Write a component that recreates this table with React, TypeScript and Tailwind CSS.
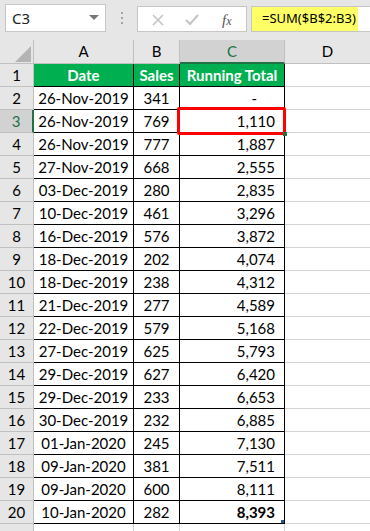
import React from "react";

const rows: [number, string, string, string][] = [
  [2, "26-Nov-2019", "341", "-"],
  [3, "26-Nov-2019", "769", "1,110"],
  [4, "26-Nov-2019", "777", "1,887"],
  [5, "27-Nov-2019", "668", "2,555"],
  [6, "03-Dec-2019", "280", "2,835"],
  [7, "10-Dec-2019", "461", "3,296"],
  [8, "16-Dec-2019", "576", "3,872"],
  [9, "18-Dec-2019", "202", "4,074"],
  [10, "18-Dec-2019", "238", "4,312"],
  [11, "21-Dec-2019", "277", "4,589"],
  [12, "22-Dec-2019", "579", "5,168"],
  [13, "27-Dec-2019", "625", "5,793"],
  [14, "29-Dec-2019", "627", "6,420"],
  [15, "29-Dec-2019", "233", "6,653"],
  [16, "30-Dec-2019", "232", "6,885"],
  [17, "01-Jan-2020", "245", "7,130"],
  [18, "09-Jan-2020", "381", "7,511"],
  [19, "09-Jan-2020", "600", "8,111"],
  [20, "10-Jan-2020", "282", "8,393"],
];

const cellFont = { fontFamily: "Lato, 'Open Sans', sans-serif" };

export default function App() {
  return (
    <div className="w-[370px] h-[531px] overflow-hidden bg-white text-black" style={cellFont}>
      {/* Toolbar */}
      <div className="h-[40px] bg-[#e6e6e6] flex items-start">
        <div
          className="ml-[5px] mt-[4px] w-[101px] h-[28px] bg-white border border-[#c6c6c6] flex items-center justify-between pl-[6px] pr-[6px]"
          style={{ fontFamily: "'Noto Sans', sans-serif" }}
        >
          <span className="text-[15px] text-[#222] leading-none">C3</span>
          <svg width="10" height="6" viewBox="0 0 10 6">
            <path d="M0 0 L10 0 L5 5 Z" fill="#777" />
          </svg>
        </div>
        <div className="w-[31px] h-[40px] flex flex-col items-center pt-[12px] gap-[3px]">
          <div className="w-[2px] h-[2px] bg-[#a6a6a6]" />
          <div className="w-[2px] h-[2px] bg-[#a6a6a6]" />
          <div className="w-[2px] h-[2px] bg-[#a6a6a6]" />
        </div>
        <div className="mt-[6px] w-[110px] h-[26px] bg-white border border-[#c6c6c6] flex items-center relative">
          <svg className="absolute left-[14px] top-[7px]" width="12" height="12" viewBox="0 0 12 12">
            <path d="M1 1 L11 11 M11 1 L1 11" stroke="#c4c4c4" strokeWidth="1.6" />
          </svg>
          <svg className="absolute left-[47px] top-[7px]" width="14" height="12" viewBox="0 0 14 12">
            <path d="M1 6 L5 10 L13 1" stroke="#c4c4c4" strokeWidth="2" fill="none" />
          </svg>
          <span
            className="absolute left-[84px] top-[2px] italic text-[15px] text-[#555]"
            style={{ fontFamily: "'Liberation Serif', serif" }}
          >
            f<span className="text-[12px]">x</span>
          </span>
        </div>
        <div className="ml-[4px] mt-[6px] flex-1 h-[26px] bg-white border-y border-l border-[#c6c6c6] flex">
          <div
            className="w-[106px] h-full bg-[#ffff66] flex items-center pl-[10px] text-[13px] text-black whitespace-nowrap"
            style={{ fontFamily: "'Noto Sans', sans-serif" }}
          >
            =SUM($B$2:B3)
          </div>
        </div>
      </div>

      {/* Column header */}
      <div className="flex h-[24px] bg-[#e6e6e6] text-[15px]">
        <div className="w-[34px] h-full border-r border-b border-[#c0c0c0] relative">
          <svg className="absolute left-[15px] top-[6px]" width="16" height="16" viewBox="0 0 16 16">
            <path d="M16 0 L16 16 L0 16 Z" fill="#b4b4b4" />
          </svg>
        </div>
        <div className="w-[100px] h-full border-r border-b border-[#c0c0c0] flex items-center justify-center">A</div>
        <div className="w-[46px] h-full border-r border-b border-[#c0c0c0] flex items-center justify-center">B</div>
        <div className="w-[105px] h-full border-r border-b-2 border-r-[#c0c0c0] border-b-[#217346] bg-[#d2d2d2] flex items-center justify-center text-[#217346]">C</div>
        <div className="flex-1 h-full border-b border-[#c0c0c0] flex items-center justify-center">D</div>
      </div>

      {/* Row 1 header */}
      <div className="flex h-[23px] text-[15px]">
        <div className="w-[34px] h-full bg-[#e6e6e6] border-r border-b border-[#c0c0c0] flex items-center justify-center">1</div>
        <div className="w-[100px] h-full bg-[#00b050] border-r border-b border-black flex items-center justify-center font-bold text-white">Date</div>
        <div className="w-[46px] h-full bg-[#00b050] border-r border-b border-black flex items-center justify-center font-bold text-white">Sales</div>
        <div className="w-[105px] h-full bg-[#00b050] border-r border-b border-black flex items-center justify-center font-bold text-white">Running Total</div>
        <div className="flex-1 h-full border-b border-[#d4d4d4]" />
      </div>

      {rows.map(([n, d, s, t]) => {
        const sel = n === 3;
        const last = n === 20;
        return (
          <div key={n} className="flex h-[23px] text-[15px]">
            <div
              className={
                sel
                  ? "w-[34px] h-full bg-[#d2d2d2] border-r-2 border-r-[#217346] border-b border-b-[#c0c0c0] flex items-center justify-center text-[#217346]"
                  : "w-[34px] h-full bg-[#e6e6e6] border-r border-b border-[#c0c0c0] flex items-center justify-center"
              }
            >
              {n}
            </div>
            <div className="w-[100px] h-full border-r border-b border-black flex items-center justify-center">{d}</div>
            <div className="w-[46px] h-full border-r border-b border-black flex items-center justify-center">{s}</div>
            <div
              className={
                "w-[105px] h-full border-r border-b border-black flex items-center justify-end relative " +
                (t === "-" ? "pr-[27px]" : "pr-[9px]") +
                (last ? " font-bold" : "")
              }
            >
              {t}
              {sel && (
                <>
                  <div className="absolute -left-[3px] -top-[3px] w-[109px] h-[28px] border-[3px] border-[#ff0000] rounded-[2px] z-10" />
                  <div className="absolute -right-[3px] -bottom-[4px] w-[4px] h-[4px] bg-[#217346] z-20" />
                </>
              )}
              {last && <div className="absolute right-0 bottom-0 w-[3px] h-[3px] bg-[#2f5597]" />}
            </div>
            <div className="flex-1 h-full border-b border-[#d4d4d4]" />
          </div>
        );
      })}

      <div className="flex h-[23px]">
        <div className="w-[34px] h-full bg-[#e6e6e6] border-r border-[#c0c0c0]" />
        <div className="w-[100px] h-full border-r border-[#d4d4d4]" />
        <div className="w-[46px] h-full border-r border-[#d4d4d4]" />
        <div className="w-[105px] h-full border-r border-[#d4d4d4]" />
        <div className="flex-1 h-full" />
      </div>
    </div>
  );
}
